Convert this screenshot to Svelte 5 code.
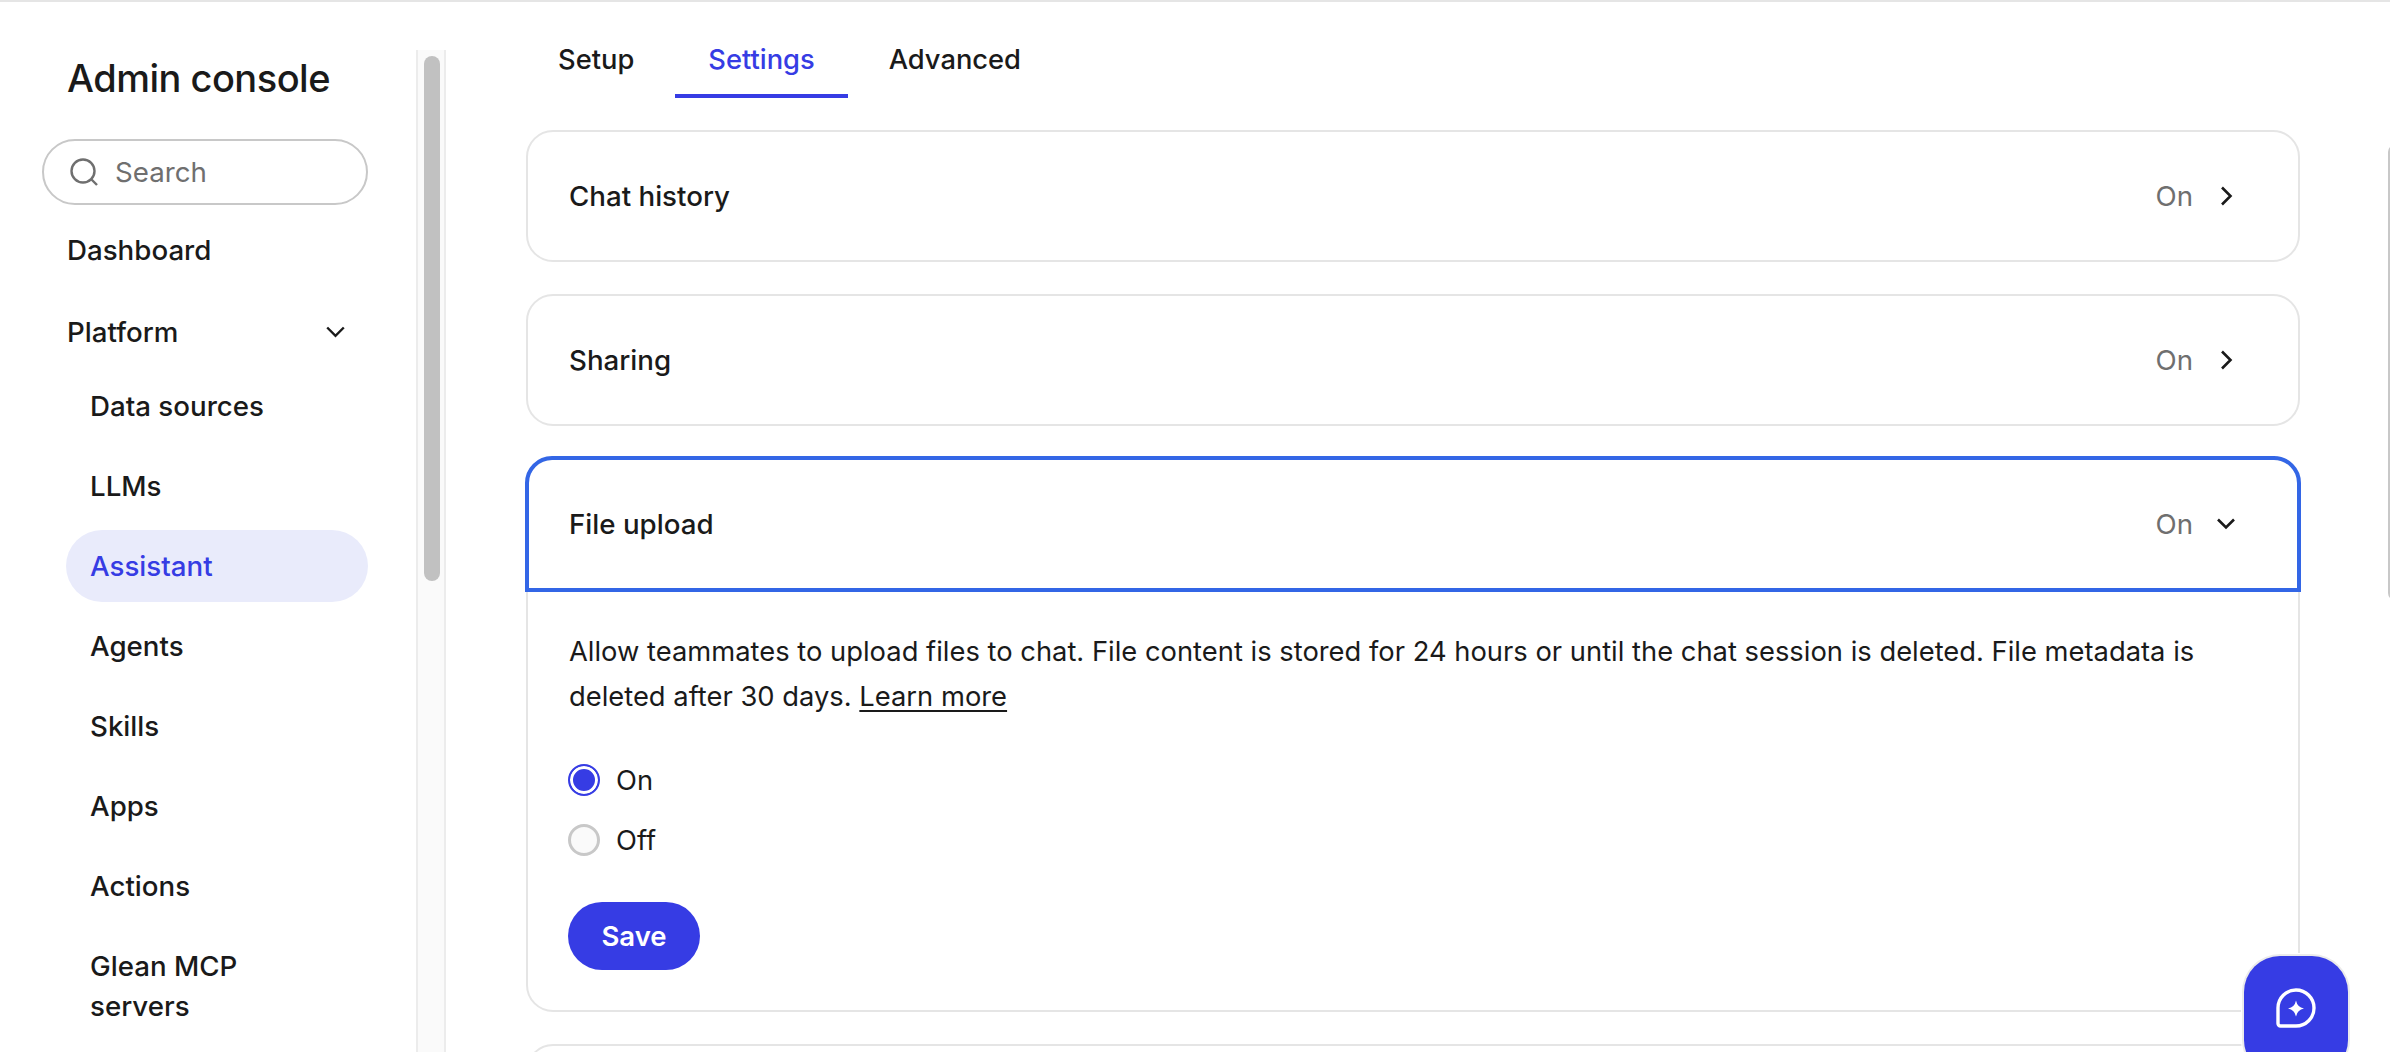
<script>
  const navItems = [
    { label: 'Data sources' },
    { label: 'LLMs' },
    { label: 'Assistant', active: true },
    { label: 'Agents' },
    { label: 'Skills' },
    { label: 'Apps' },
    { label: 'Actions' },
    { label: 'Glean MCP servers' }
  ];
  const tabs = ['Setup', 'Settings', 'Advanced'];
</script>

<div class="page">
  <aside class="sidebar">
    <div class="side-content">
      <h1>Admin console</h1>
      <div class="search">
        <svg width="32" height="32" viewBox="0 0 32 32" fill="none" stroke="#6f6f6f" stroke-width="2.4">
          <circle cx="15" cy="15" r="11.5" />
          <path d="M23.5 23.5 L29 29" />
        </svg>
        <span>Search</span>
      </div>
      <div class="top-item dash">Dashboard</div>
      <div class="top-item">
        <span>Platform</span>
        <svg class="plat-chev" width="19" height="12" viewBox="0 0 19 12" fill="none" stroke="#1a1a1a" stroke-width="2.4">
          <path d="M1.2 1.5 L9.5 9.8 L17.8 1.5" />
        </svg>
      </div>
      <ul>
        {#each navItems as item}
          <li class:active={item.active}>{item.label}</li>
        {/each}
      </ul>
    </div>
    <div class="track"><div class="thumb"></div></div>
  </aside>

  <main>
    <nav class="tabs">
      {#each tabs as t}
        <div class="tab" class:current={t === 'Settings'}>{t}</div>
      {/each}
    </nav>

    <section class="card">
      <div class="row">
        <span>Chat history</span>
        <div class="status">
          <span class="on">On</span>
          <svg width="24" height="24" viewBox="0 0 24 24" fill="none" stroke="#1a1a1a" stroke-width="2.6"><path d="M8 3.5 L16.5 12 L8 20.5" /></svg>
        </div>
      </div>
    </section>
    <section class="card">
      <div class="row">
        <span>Sharing</span>
        <div class="status">
          <span class="on">On</span>
          <svg width="24" height="24" viewBox="0 0 24 24" fill="none" stroke="#1a1a1a" stroke-width="2.6"><path d="M8 3.5 L16.5 12 L8 20.5" /></svg>
        </div>
      </div>
    </section>
    <section class="card open">
      <div class="row head">
        <span>File upload</span>
        <div class="status">
          <span class="on">On</span>
          <svg width="24" height="24" viewBox="0 0 24 24" fill="none" stroke="#1a1a1a" stroke-width="2.6"><path d="M4 7.5 L12 15.5 L20 7.5" /></svg>
        </div>
      </div>
      <div class="body">
        <p>Allow teammates to upload files to chat. File content is stored for 24 hours or until the chat session is deleted. File metadata is deleted after 30 days. <a href="#top">Learn more</a></p>
        <label class="radio"><span class="dot checked"></span>On</label>
        <label class="radio"><span class="dot"></span>Off</label>
        <button>Save</button>
      </div>
    </section>
    <section class="card"><div class="row"></div></section>
  </main>

  <div class="page-scroll"></div>

  <div class="fab">
    <svg width="40" height="40" viewBox="0 0 40 40" fill="none">
      <path d="M2 20 A18 18 0 1 1 20 38 H4.5 A2.5 2.5 0 0 1 2 35.5 Z" stroke="#fff" stroke-width="3.4" stroke-linejoin="round" />
      <path d="M20 12.5 Q21.3 19.2 28 20.5 Q21.3 21.8 20 28.5 Q18.7 21.8 12 20.5 Q18.7 19.2 20 12.5 Z" fill="#fff" />
    </svg>
  </div>
</div>

<style>
  :global(body) {
    margin: 0;
    background: #fff;
  }
  .page {
    position: relative;
    display: flex;
    height: 1052px;
    box-sizing: border-box;
    border-top: 2px solid #e5e5e5;
    overflow: hidden;
    font-family: Inter, "Liberation Sans", sans-serif;
    font-size: 27.7px;
    font-weight: 500;
    color: #1a1a1a;
  }
  .sidebar {
    width: 446px;
    flex: none;
    display: flex;
    padding-top: 48px;
    box-sizing: border-box;
  }
  .side-content {
    width: 416px;
    flex: none;
    padding-left: 42px;
    padding-right: 48px;
    box-sizing: border-box;
  }
  h1 {
    margin: 6px 0 0 25px;
    font-size: 38px;
    line-height: 44px;
    font-weight: 500;
    letter-spacing: -0.5px;
  }
  .search {
    margin-top: 39px;
    height: 66px;
    box-sizing: border-box;
    border: 2px solid #c8c8c8;
    border-radius: 33px;
    display: flex;
    align-items: center;
    gap: 15px;
    padding-left: 24px;
    color: #6f6f6f;
    font-weight: 400;
  }
  .top-item {
    height: 72px;
    margin-left: 25px;
    display: flex;
    align-items: center;
    justify-content: space-between;
    line-height: 40px;
  }
  .dash {
    margin-top: 9px;
    margin-bottom: 10px;
  }
  .plat-chev {
    margin-right: 23px;
  }
  ul {
    list-style: none;
    margin: 2px 0 0 24px;
    padding: 0;
    display: flex;
    flex-direction: column;
    gap: 8px;
  }
  li {
    padding: 16px 48px 16px 24px;
    line-height: 40px;
    border-radius: 36px;
  }
  li.active {
    background: #e9ebfb;
    color: #363ce4;
  }
  .track {
    width: 30px;
    flex: none;
    box-sizing: border-box;
    border-left: 2px solid #ececec;
    border-right: 2px solid #ececec;
    background: #fafafa;
    padding: 6px 4px 0 6px;
  }
  .thumb {
    height: 525px;
    border-radius: 8px;
    background: #c1c1c1;
  }
  main {
    width: 1774px;
    flex: none;
    margin-left: 80px;
    box-sizing: border-box;
  }
  .tabs {
    display: flex;
    gap: 8px;
    margin-bottom: 32px;
    margin-left: -1px;
    font-size: 27.3px;
  }
  .tab {
    padding: 0 33px;
    height: 96px;
    box-sizing: border-box;
    line-height: 116px;
  }
  .tab.current {
    color: #363ce4;
    border-bottom: 4px solid #363ce4;
  }
  .card {
    border: 2px solid #e5e5e5;
    border-radius: 27px;
    margin-bottom: 32px;
    background: #fff;
  }
  .row {
    height: 128px;
    padding: 0 41px;
    box-sizing: border-box;
    display: flex;
    align-items: center;
    justify-content: space-between;
  }
  .status {
    display: flex;
    align-items: center;
    gap: 21px;
    padding-right: 19px;
  }
  .on {
    color: #6f6f6f;
    font-weight: 400;
  }
  .head {
    margin: -4px -3px 0;
    height: 136px;
    padding: 0 40px;
    border: 4px solid #3366e6;
    border-radius: 27px 27px 0 0;
  }
  .body {
    padding: 38px 41px 40px;
    font-weight: 400;
    font-size: 27.35px;
  }
  p {
    margin: 0 0 31px;
    line-height: 44.5px;
  }
  a {
    color: inherit;
    text-underline-offset: 4px;
  }
  .radio {
    display: flex;
    align-items: center;
    gap: 16px;
    height: 60px;
    margin-left: -1px;
  }
  .dot {
    flex: none;
    width: 32px;
    height: 32px;
    box-sizing: border-box;
    border-radius: 50%;
    border: 3px solid #c8c8c8;
    background: #fafafa;
  }
  .dot.checked {
    border: 2px solid #363ce4;
    background: #363ce4;
    box-shadow: inset 0 0 0 3px #fff;
  }
  button {
    display: block;
    margin: 32px 0 0 -1px;
    width: 132px;
    height: 68px;
    padding: 0;
    border: none;
    border-radius: 34px;
    background: #363ce4;
    color: #fff;
    font: inherit;
    font-size: 27.5px;
    font-weight: 600;
  }
  .page-scroll {
    position: absolute;
    right: -12px;
    top: 143px;
    width: 14px;
    height: 455px;
    border-radius: 7px;
    background: #c8c8c8;
  }
  .fab {
    position: absolute;
    left: 2244px;
    top: 954px;
    width: 104px;
    height: 120px;
    border-radius: 36px;
    background: #363ce4;
    box-shadow: 0 0 0 2px #ebebeb, 0 0 0 3px #fff;
    display: flex;
    justify-content: center;
    padding-top: 32px;
    box-sizing: border-box;
  }
</style>
